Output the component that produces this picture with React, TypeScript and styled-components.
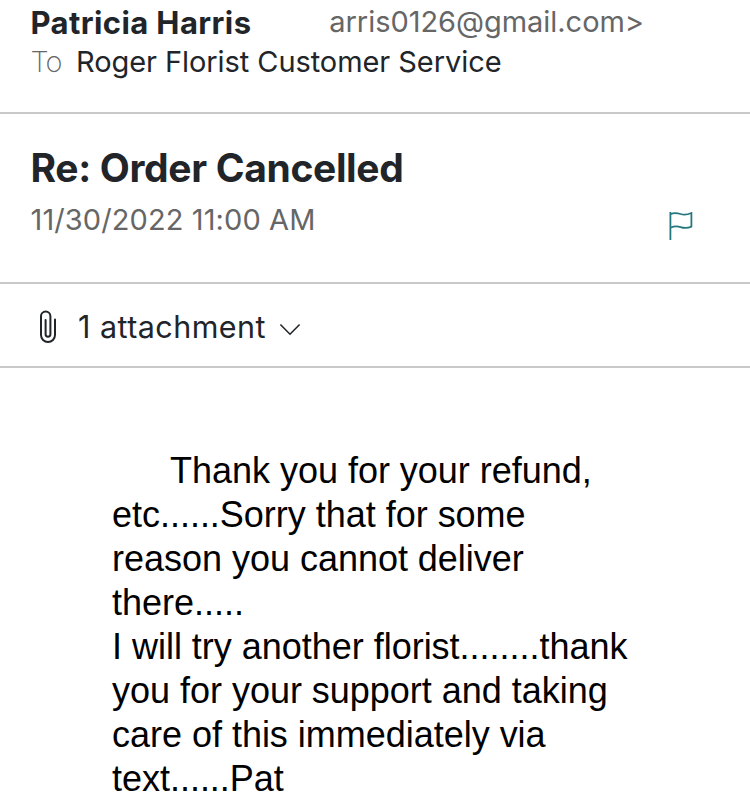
import React from "react";
import styled, { createGlobalStyle } from "styled-components";

const Global = createGlobalStyle`
  body { margin: 0; background: #fff; }
  * { box-sizing: border-box; }
`;
const Page = styled.main`
  width: 750px;
  height: 805px;
  overflow: hidden;
  display: flex;
  flex-direction: column;
  font-family: Inter, sans-serif;
  color: #212529;
  background: #fff;
`;
const Section = styled.section<{ $height: number }>`
  height: ${(p) => p.$height}px;
  flex: none;
  padding-left: 30.5px;
  border-bottom: 2px solid #c8c8c8;
`;
const Header = styled(Section)`
  padding-top: 3px;
`;
const Sender = styled.div`
  display: flex;
  justify-content: space-between;
  width: 613.5px;
  line-height: 39px;
  white-space: nowrap;
`;
const Name = styled.strong`
  font-size: 31px;
  font-weight: 700;
  letter-spacing: 0.4px;
`;
const Email = styled.span`
  font-size: 29px;
  line-height: 38px;
  letter-spacing: -0.04px;
  color: #666;
`;
const Recipient = styled.div`
  display: flex;
  gap: 16px;
  font-size: 29px;
  line-height: 39px;
  letter-spacing: -0.07px;
`;
const ToLabel = styled.span`
  width: 29.5px;
  font-weight: 200;
  letter-spacing: -0.9px;
  color: #666;
`;
const Summary = styled(Section)`
  display: flex;
  justify-content: space-between;
  padding-top: 30px;
  padding-right: 57px;
`;
const Subject = styled.h1`
  margin: 0;
  font-size: 39px;
  line-height: 48px;
  font-weight: 700;
  letter-spacing: -0.34px;
`;
const DateLine = styled.div`
  margin-top: 3px;
  font-size: 29px;
  line-height: 50px;
  letter-spacing: 0.1px;
  color: #666;
`;
const FlagIcon = styled.svg`
  margin-top: 65px;
`;
const Attachment = styled(Section)`
  display: flex;
  align-items: center;
  padding-left: 36px;
  padding-top: 3px;
`;
const AttachmentText = styled.span`
  margin: 0 10px 0 18px;
  font-size: 30.5px;
  letter-spacing: 0.45px;
`;
const ChevronIcon = styled.svg`
  margin-top: 7px;
`;
const Body = styled.article`
  padding: 81px 0 0 112px;
  color: #000;
  font: 36px/44px "Liberation Sans", sans-serif;
  letter-spacing: -0.02px;
  white-space: pre;
`;
const FirstLine = styled.p`
  margin: 0;
  padding-left: 58px;
`;
const Text = styled.p`
  margin: 0;
`;

export default function App() {
  return (
    <Page>
      <Global />
      <Header $height={114}>
        <Sender>
          <Name>Patricia Harris</Name>
          <Email>arris0126@gmail.com&gt;</Email>
        </Sender>
        <Recipient>
          <ToLabel>To</ToLabel>
          <span>Roger Florist Customer Service</span>
        </Recipient>
      </Header>
      <Summary $height={170}>
        <div>
          <Subject>Re: Order Cancelled</Subject>
          <DateLine>11/30/2022 11:00 AM</DateLine>
        </div>
        <FlagIcon width="28" height="34" viewBox="0 0 28 34" fill="none" stroke="#24787d" strokeWidth="1.8">
          <path d="M5.4 3V31M5.4 5.2C9 3.5 12 3.8 15.5 5S22 5.9 26.4 4V17.6C22 19.6 19 19.2 15.5 18.1S9 17.2 5.4 18.8" />
        </FlagIcon>
      </Summary>
      <Attachment $height={84}>
        <svg width="24" height="38" viewBox="0 0 24 38" fill="none" stroke="#212529" strokeWidth="2" strokeLinecap="round">
          <path d="M19 11.5V27A7 7 0 0 1 5 27V8.2A4.7 4.7 0 0 1 14.4 8.2V26.3A2.4 2.4 0 0 1 9.6 26.3V12" />
        </svg>
        <AttachmentText>1 attachment</AttachmentText>
        <ChevronIcon width="28" height="18" viewBox="0 0 28 18" fill="none" stroke="#212529" strokeWidth="1.6">
          <path d="M4.4 3.5L14 13.2L23.6 3.5" />
        </ChevronIcon>
      </Attachment>
      <Body>
        <FirstLine>Thank you for your refund,</FirstLine>
        <Text>{`etc......Sorry that for some
reason you cannot deliver
there.....
I will try another florist........thank
you for your support and taking
care of this immediately via
text......Pat`}</Text>
      </Body>
    </Page>
  );
}
